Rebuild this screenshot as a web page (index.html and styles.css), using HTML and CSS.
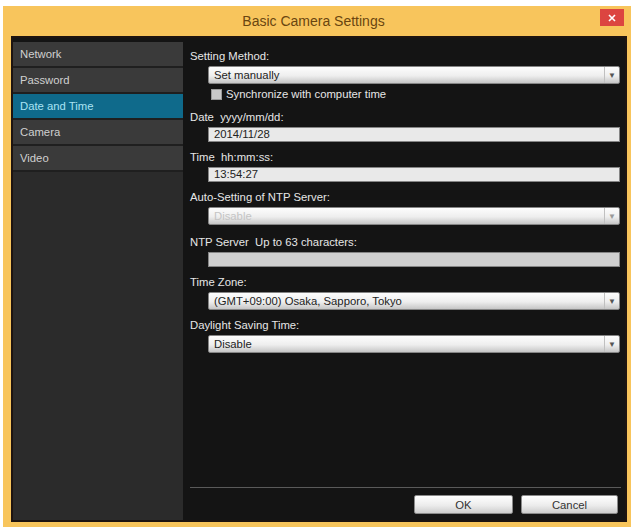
FILE: index.html
```html
<!DOCTYPE html>
<html lang="en">
<head>
    <meta charset="UTF-8">
    <meta name="viewport" content="width=device-width, initial-scale=1.0">
    <title>Basic Camera Settings</title>
    <link rel="stylesheet" href="styles.css">
</head>
<body>
    <div class="window">
        <div class="titlebar">
            <span></span>
            <span class="title">Basic Camera Settings</span>
            <button class="close-btn" aria-label="Close">
                <svg width="8" height="8" viewBox="0 0 8 8"><path d="M1 1L7 7M7 1L1 7" stroke="#fff" stroke-width="1.6"/></svg>
            </button>
        </div>

        <div class="frame">
            <ul class="sidebar">
                <li>Network</li>
                <li>Password</li>
                <li class="active">Date and Time</li>
                <li>Camera</li>
                <li>Video</li>
            </ul>

            <div class="content">
                <div class="label">Setting Method:</div>
                <div class="select"><span>Set manually</span><i>&#9660;</i></div>
                <div class="check-row"><span class="checkbox"></span>Synchronize with computer time</div>

                <div class="label">Date&nbsp; yyyy/mm/dd:</div>
                <div class="input">2014/11/28</div>

                <div class="label">Time&nbsp; hh:mm:ss:</div>
                <div class="input">13:54:27</div>

                <div class="label">Auto-Setting of NTP Server:</div>
                <div class="select disabled"><span>Disable</span><i>&#9660;</i></div>

                <div class="label gap">NTP Server&nbsp; Up to 63 characters:</div>
                <div class="input disabled"></div>

                <div class="label">Time Zone:</div>
                <div class="select"><span>(GMT+09:00) Osaka, Sapporo, Tokyo</span><i>&#9660;</i></div>

                <div class="label">Daylight Saving Time:</div>
                <div class="select"><span>Disable</span><i>&#9660;</i></div>

                <div class="footer">
                    <button class="btn ok">OK</button>
                    <button class="btn cancel">Cancel</button>
                </div>
            </div>
        </div>
    </div>
</body>
</html>
```

FILE: styles.css
```css
body {
    margin: 0;
    background: #ffffff;
    font-family: "Liberation Sans", Arial, sans-serif;
    font-size: 11.3px;
}
.window {
    margin: 6px 0 0 3px;
    width: 628px;
    height: 521px;
    background: #f8c55c;
    display: flex;
    flex-direction: column;
    box-sizing: border-box;
}
.titlebar {
    height: 30px;
    display: grid;
    grid-template-columns: 1fr auto 1fr;
    align-items: center;
    padding-right: 7px;
}
.title {
    font-size: 14px;
    color: #6a4510;
}
.close-btn {
    justify-self: end;
    align-self: start;
    margin-top: 3px;
    width: 24px;
    height: 17px;
    border: none;
    padding: 0;
    background: #dc4540;
    display: flex;
    align-items: center;
    justify-content: center;
}
.frame {
    margin: 0 4px 5px 8px;
    height: 486px;
    box-sizing: border-box;
    border: 2px solid #1e1410;
    background: #141414;
    display: flex;
}
.sidebar {
    list-style: none;
    margin: 4px 0 0 0;
    padding: 0;
    width: 170px;
    background: #2b2b2b;
}
.sidebar li {
    height: 24px;
    line-height: 24px;
    padding-left: 7px;
    background: #3a3a3a;
    color: #d0d0d0;
    border-bottom: 2px solid #1f1f1f;
}
.sidebar li.active {
    background: #0f6a8b;
    color: #a9e3f3;
}
.content {
    flex: 1;
    display: flex;
    flex-direction: column;
    padding: 10px 4px 0 7px;
}
.label {
    color: #e6e6e6;
    line-height: 16px;
    margin-top: 7px;
}
.label:first-child {
    margin-top: 0;
}
.label.gap {
    margin-top: 9px;
}
.select, .input {
    margin: 2px 1px 0 18px;
    box-sizing: border-box;
    border: 1px solid #858585;
    color: #222;
    padding-left: 5px;
}
.select {
    height: 18px;
    display: flex;
    align-items: center;
    background: linear-gradient(#fdfdfd, #eeeeee 55%, #c6c6c6);
    border-radius: 2px;
}
.select span {
    flex: 1;
}
.select i {
    font-style: normal;
    width: 14px;
    height: 100%;
    border-left: 1px solid #c0c0c0;
    color: #555;
    font-size: 8px;
    display: flex;
    align-items: center;
    justify-content: center;
}
.select.disabled span {
    color: #c4c4c4;
}
.select.disabled i {
    color: #999;
}
.input {
    height: 15px;
    line-height: 13px;
    background: #e9e9e9;
}
.input.disabled {
    background: #cfcfcf;
}
.check-row {
    margin: 2px 0 0 21px;
    height: 16px;
    display: flex;
    align-items: center;
    gap: 4px;
    color: #e6e6e6;
}
.checkbox {
    width: 9px;
    height: 9px;
    background: #c9c9c9;
    border: 1px solid #9a9a9a;
}
.footer {
    margin-top: auto;
    border-top: 1px solid #5a5a5a;
    padding: 7px 3px 6px 0;
    display: flex;
    justify-content: flex-end;
    gap: 8px;
}
.btn {
    height: 19px;
    border: 1px solid #8a8a8a;
    border-radius: 2px;
    background: linear-gradient(#ffffff, #ececec 55%, #cdcdcd);
    color: #333;
    font-family: "Liberation Sans", Arial, sans-serif;
    font-size: 11.3px;
    padding: 0;
}
.btn.ok {
    width: 99px;
}
.btn.cancel {
    width: 97px;
}
```
